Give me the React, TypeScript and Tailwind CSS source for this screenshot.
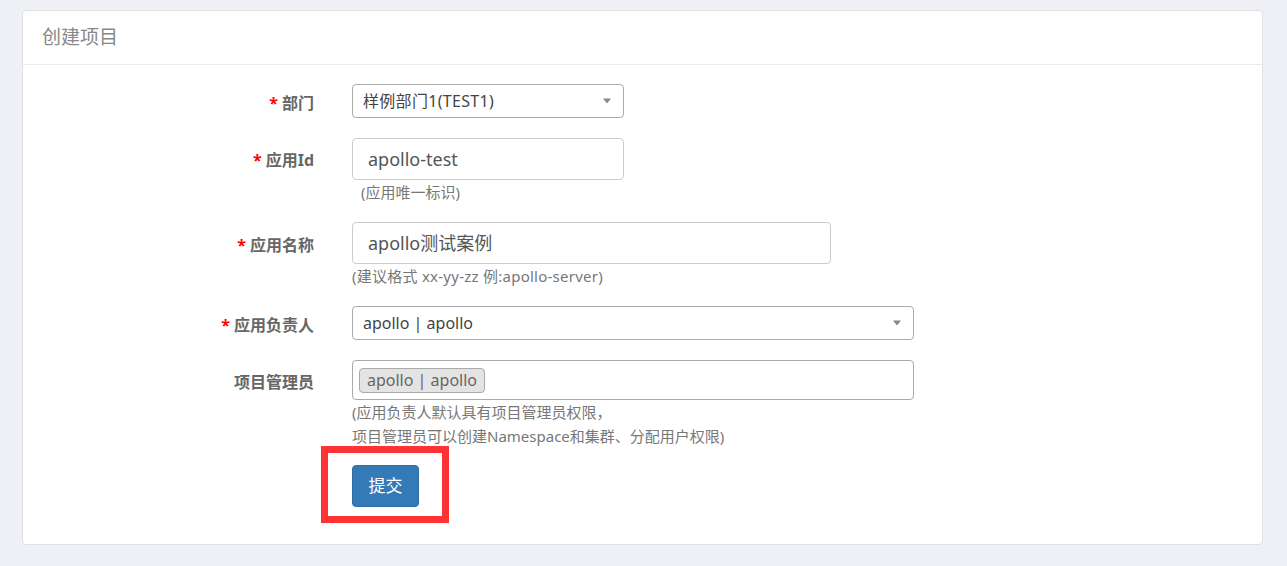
import React from "react";

const font = { fontFamily: '"Noto Sans", "Noto Sans CJK SC", sans-serif' };

function Label({ text, required, h }: { text: string; required?: boolean; h: string }) {
  return (
    <div className={`w-[291px] shrink-0 flex items-center justify-end ${h}`}>
      <span className="text-[16px] font-bold text-[#666] leading-[20px] pt-[4px]">
        {required && <span className="text-[#ff0000] mr-[4px]">*</span>}
        {text}
      </span>
    </div>
  );
}

function Arrow() {
  return (
    <span className="absolute right-[12px] top-1/2 -translate-y-1/2 w-0 h-0 border-l-[4px] border-r-[4px] border-t-[5px] border-l-transparent border-r-transparent border-t-[#888]" />
  );
}

export default function App() {
  return (
    <div style={font} className="w-[1287px] h-[566px] bg-[#eff0f5] pt-[10px] overflow-hidden">
      <div className="ml-[22px] mr-[24px] bg-white border border-[#dfe1e6] rounded-[4px]">
        <div className="h-[54px] border-b border-[#e8eaef] flex items-center pl-[19px]">
          <span className="text-[19px] text-[#888] leading-none">创建项目</span>
        </div>
        <div className="pt-[19px] pb-[37px]">
          {/* 部门 */}
          <div className="flex">
            <Label text="部门" required h="h-[34px]" />
            <div className="ml-[38px] relative w-[272px] h-[34px] border border-[#aaa] rounded-[4px] flex items-center pl-[10px]">
              <span className="text-[16px] tracking-[0.3px] text-[#444]">样例部门1(TEST1)</span>
              <Arrow />
            </div>
          </div>
          {/* 应用Id */}
          <div className="flex mt-[20px]">
            <Label text="应用Id" required h="h-[40px]" />
            <div className="ml-[38px]">
              <div className="w-[272px] h-[42px] border border-[#ccc] rounded-[4px] flex items-center pl-[15px]">
                <span className="text-[18px] text-[#555]">apollo-test</span>
              </div>
              <div className="mt-[3px] pl-[9px] text-[15px] leading-[18px] text-[#777]">(应用唯一标识)</div>
            </div>
          </div>
          {/* 应用名称 */}
          <div className="flex mt-[21px]">
            <Label text="应用名称" required h="h-[42px]" />
            <div className="ml-[38px]">
              <div className="w-[479px] h-[42px] border border-[#ccc] rounded-[4px] flex items-center pl-[15px]">
                <span className="text-[18px] text-[#555]">apollo测试案例</span>
              </div>
              <div className="mt-[3px] text-[15px] tracking-[0.25px] leading-[18px] text-[#777]">(建议格式 xx-yy-zz 例:apollo-server)</div>
            </div>
          </div>
          {/* 应用负责人 */}
          <div className="flex mt-[21px]">
            <Label text="应用负责人" required h="h-[34px]" />
            <div className="ml-[38px] relative w-[562px] h-[34px] border border-[#aaa] rounded-[4px] flex items-center pl-[10px]">
              <span className="text-[16px] text-[#444]">apollo | apollo</span>
              <Arrow />
            </div>
          </div>
          {/* 项目管理员 */}
          <div className="flex mt-[20px]">
            <Label text="项目管理员" h="h-[40px]" />
            <div className="ml-[38px]">
              <div className="w-[562px] h-[40px] border border-[#aaa] rounded-[4px] flex items-center pl-[6px]">
                <span className="h-[25px] px-[7px] bg-[#e4e4e4] border border-[#aaa] rounded-[4px] flex items-center text-[16px] text-[#666] leading-none">
                  apollo | apollo
                </span>
              </div>
              <div className="mt-[3px] text-[15px] leading-[18px] text-[#777]">(应用负责人默认具有项目管理员权限，</div>
              <div className="mt-[6px] text-[15px] leading-[18px] text-[#777]">项目管理员可以创建Namespace和集群、分配用户权限)</div>
            </div>
          </div>
          {/* 提交 */}
          <div className="flex mt-[20px]">
            <div className="w-[291px] shrink-0" />
            <div className="ml-[38px] relative">
              <button className="w-[67px] h-[42px] bg-[#337ab7] border border-[#2e6da4] rounded-[4px] text-white text-[17px] flex items-center justify-center">
                提交
              </button>
              <div className="absolute left-[-31px] top-[-19px] w-[128px] h-[77px] border-[7px] border-[#ff3333] pointer-events-none" />
            </div>
          </div>
        </div>
      </div>
    </div>
  );
}
